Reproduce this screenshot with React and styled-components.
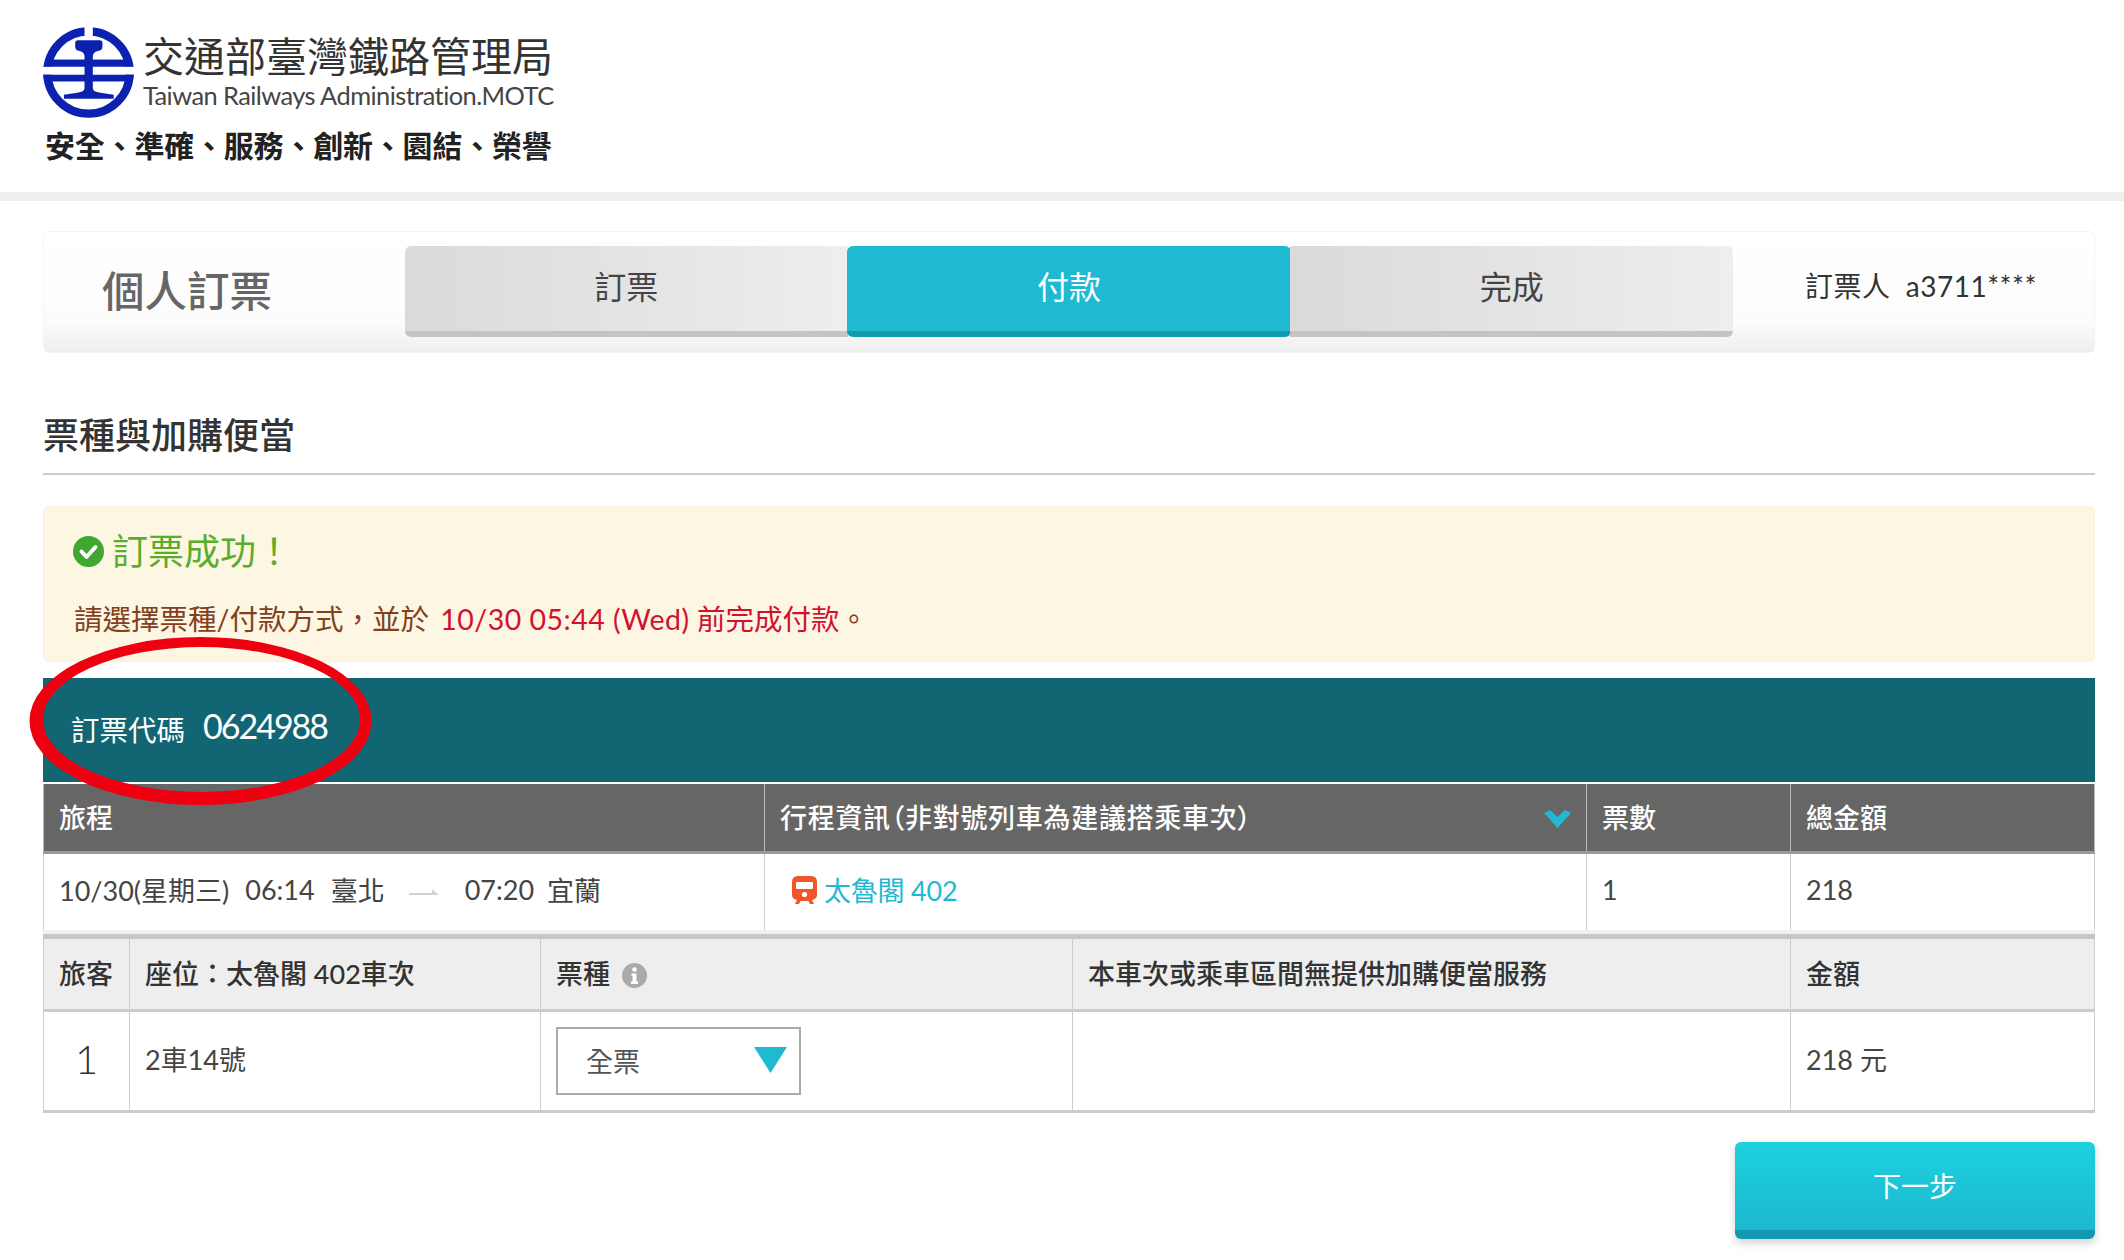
import React from "react";
import styled, { createGlobalStyle } from "styled-components";

const Global = createGlobalStyle`
  html, body { margin: 0; padding: 0; background: #fff; }
  body { font-family: "Lato", "Noto Sans CJK TC", sans-serif; color: #444; overflow: hidden; }
  #root { width: 2124px; height: 1260px; }
  * { box-sizing: border-box; }
`;

const Page = styled.div`width: 2124px; height: 1260px; background: #fff;`;
const Header = styled.header`height: 192px; padding: 27px 0 0 43px;`;
const Brand = styled.div`display: flex; gap: 9px; align-items: flex-start;`;
const BrandText = styled.div`display: flex; flex-direction: column; width: 411px; padding-top: 3px;`;
const AgencyName = styled.div`font-size: 41px; line-height: 54px; color: #333; white-space: nowrap; font-weight: 400;`;
const AgencyEnglish = styled.div`font-size: 25.4px; line-height: 28px; color: #444; white-space: nowrap; letter-spacing: -0.55px; margin-top: -3px; font-weight: 400;`;
const Slogan = styled.div`font-size: 30px; line-height: 40px; margin: 7px 0 0 2px; font-weight: 700; color: #222; white-space: nowrap; width: 506px; letter-spacing: -0.2px;`;
const Divider = styled.div`height: 9px; background: #eee;`;
const Main = styled.main`padding: 30px 29px 0 43px;`;

const StepPanel = styled.div`
  height: 122px; padding-top: 14px; display: flex; align-items: flex-start;
  border: 1px solid #f3f3f3; border-radius: 6px;
  background: linear-gradient(#fff 0%, #fcfcfc 75%, #eee 100%);
`;
const PanelTitle = styled.h1`width: 361px; height: 91px; margin: 0; padding-left: 58px; font-size: 42.5px; line-height: 90px; font-weight: 500; color: #666;`;
const Steps = styled.div`display: grid; grid-template-columns: repeat(3, 1fr); width: 1328px;`;
const Step = styled.div`
  height: 91px; line-height: 82px; text-align: center; font-size: 32px;
  color: ${p => (p.$active ? "#fff" : "#444")};
  border-bottom: 6px solid ${p => (p.$active ? "#129ab0" : "#c4c4c4")};
  border-radius: ${p => p.$radius};
  margin: ${p => (p.$active ? "0 -1px" : "0")};
  background: ${p => (p.$active ? "#1fb9d2" : "linear-gradient(90deg, #dadada, #eeeeee)")};
`;
const UserInfo = styled.div`flex: 1; padding-left: 72px; font-size: 28px; line-height: 80px; color: #333; white-space: nowrap; letter-spacing: 0.5px;`;

const SectionHeading = styled.h2`
  margin: 60px 0 0; height: 62px; padding-bottom: 16px; font-size: 36px; line-height: 44px;
  font-weight: 500; color: #333; border-bottom: 2px solid #ccc;
`;
const Alert = styled.div`
  margin-top: 31px; height: 156px; padding: 19px 29px 0; background: #fdf6e3;
  border-radius: 5px; border: 1px solid #faf2dd;
`;
const AlertTitle = styled.div`display: flex; align-items: center; gap: 8px; font-size: 36px; line-height: 50px; color: #5aad2b;`;
const AlertText = styled.p`margin: 21px 0 0; padding-left: 1px; font-size: 28.5px; line-height: 44px; color: #82401c; white-space: nowrap;`;
const Deadline = styled.span`color: #d3102f; margin-left: 4px;`;
const DeadlineTime = styled.span`letter-spacing: 0.5px;`;

const Booking = styled.section`position: relative; margin-top: 16px;`;
const CodeBar = styled.div`
  height: 106px; background: #126673; color: #fff; padding: 0 28px 4px;
  display: flex; align-items: center; gap: 18px; border-bottom: 2px solid #fff; 
`;
const CodeLabel = styled.span`font-size: 28.5px; line-height: 40px; padding-top: 4px;`;
const CodeValue = styled.span`font-size: 34px; line-height: 40px; margin-top: -4px; letter-spacing: -2px;`;
const Ring = styled.svg`position: absolute; left: -14px; top: -41px; pointer-events: none;`;

const Row = styled.div`
  display: grid; grid-template-columns: ${p => p.$cols}; height: ${p => p.$h}px;
  background: ${p => p.$bg || "#fff"}; color: ${p => p.$color || "#444"};
  border-bottom: ${p => p.$line || "3px solid #ccc"};
`;
const Cell = styled.div`
  display: flex; align-items: center; gap: ${p => p.$gap || 0}px;
  padding: 0 15px ${p => (p.$bold ? 3 : 5)}px; font-size: 27px;
  font-weight: ${p => (p.$bold ? 500 : 400)}; white-space: nowrap; min-width: 0;
  border-left: 1px solid ${p => p.$rule || "#ccc"};
  &:last-child { border-right: 1px solid ${p => p.$rule || "#ccc"}; }
`;
const Wide = styled.span`font-feature-settings: "palt"; flex: 1; letter-spacing: 0.7px;`;
const Arrow = styled.svg`margin: 8px 26px 0 24px;`;
const TimeText = styled.span`margin-right: ${p => p.$gap}px;`;
const TrainName = styled.span`color: #1fb9d2;`;
const TrainLink = styled.span`display: flex; align-items: center; gap: 7px; padding-left: 12px; letter-spacing: -0.2px;`;
const PassengerNo = styled.span`font-size: 40px; width: 100%; text-align: center; font-weight: 300; color: #333;`;
const SelectBox = styled.div`
  width: 245px; height: 68px; padding: 0 12px 2px 28px; margin-top: 5px; display: flex; align-items: center; justify-content: space-between;
  border: 2px solid #aaa; color: #555; background: #fff;
`;
const Separator = styled.div`height: 9px; background: linear-gradient(#f0f0f0 0 4px, #c6c6c6 4px);`;
const Actions = styled.div`display: flex; justify-content: flex-end; margin: 29px 0 0;`;
const NextButton = styled.button`
  width: 360px; height: 97px; padding: 0 0 3px; border: 0; border-bottom: 9px solid #1298b0; border-radius: 6px;
  background: linear-gradient(#1dd1de, #1cb8d1); color: #fff; font: inherit; font-size: 28px;
  box-shadow: 0 4px 8px rgba(0,0,0,.18);
`;
const InfoIcon = styled.svg`margin-top: 6px;`;
const ChevronIcon = styled.svg`margin-top: 6px;`;

const TOP = "721px 822px 204px 305px";
const BOTTOM = "86px 411px 532px 718px 305px";

const Logo = () => (
  <svg width="91" height="91" viewBox="68 52 272 274" aria-label="logo">
    <defs>
      <clipPath id="disc"><circle cx="204" cy="189" r="136" /></clipPath>
    </defs>
    <circle cx="204" cy="189" r="124" fill="none" stroke="#0b22b0" strokeWidth="25" />
    <g clipPath="url(#disc)" fill="#0b22b0">
      <rect x="60" y="150" width="290" height="22" />
      <rect x="60" y="195" width="290" height="21" />
    </g>
    <rect x="60" y="172" width="290" height="23" fill="#fff" />
    <rect x="192" y="44" width="25" height="44" fill="#fff" />
    <path fill="#0b22b0" d="M172 92H238Q246 92 246 100V112Q246 122 232 124Q217 128 217 140V236Q217 248 240 250L280 256V268H130V256L170 250Q192 248 192 236V140Q192 128 177 124Q164 122 164 112V100Q164 92 172 92Z" />
  </svg>
);

const Check = () => (
  <svg width="31" height="31" viewBox="0 0 31 31">
    <circle cx="15.5" cy="15.5" r="15.5" fill="#3fa82e" />
    <path d="M8.5 15.5l5 5.5 9-10" fill="none" stroke="#fff" strokeWidth="4" strokeLinecap="round" strokeLinejoin="round" />
  </svg>
);

const Train = () => (
  <svg width="25" height="28" viewBox="0 0 25 28">
    <path fill="#f0562a" d="M6 0H19Q25 0 25 6V19Q25 23 20 24L22 28H18L16.5 25H8.5L7 28H3L5 24Q0 23 0 19V6Q0 0 6 0Z" />
    <rect x="4" y="6" width="17" height="7" rx="1" fill="#fff" />
    <circle cx="12.5" cy="18.5" r="2.6" fill="#fff" />
  </svg>
);

const Chevron = () => (
  <ChevronIcon width="27" height="18" viewBox="0 0 27 18">
    <path d="M0 3L6 0L13.500 7L21 0L27 3L13.500 18Z" fill="#1fb9d2" />
  </ChevronIcon>
);

const Info = () => (
  <InfoIcon width="25" height="25" viewBox="0 0 25 25">
    <circle cx="12.500" cy="12.500" r="12.500" fill="#aaa" />
    <circle cx="12.500" cy="6.500" r="2.300" fill="#fff" />
    <path d="M9.500 10.500h5v8h1.500v2.500h-7v-2.500h1.500v-5.500h-1z" fill="#fff" />
  </InfoIcon>
);

const Triangle = () => (
  <svg width="33" height="26" viewBox="0 0 33 26"><path d="M0 0H33L16.500 26Z" fill="#1fb9d2" /></svg>
);

export default function App() {
  return (
    <Page>
      <Global />
      <Header>
        <Brand>
          <Logo />
          <BrandText>
            <AgencyName>交通部臺灣鐵路管理局</AgencyName>
            <AgencyEnglish>Taiwan Railways Administration.MOTC</AgencyEnglish>
          </BrandText>
        </Brand>
        <Slogan>安全、準確、服務、創新、園結、榮譽</Slogan>
      </Header>
      <Divider />
      <Main>
        <StepPanel>
          <PanelTitle>個人訂票</PanelTitle>
          <Steps>
            <Step $radius="6px 0 0 6px">訂票</Step>
            <Step $active $radius="6px">付款</Step>
            <Step $radius="0 6px 6px 0">完成</Step>
          </Steps>
          <UserInfo>訂票人&nbsp;&nbsp;a3711****</UserInfo>
        </StepPanel>
        <SectionHeading>票種與加購便當</SectionHeading>
        <Alert>
          <AlertTitle><Check />訂票成功！</AlertTitle>
          <AlertText>請選擇票種/付款方式，並於 <Deadline><DeadlineTime>10/30 05:44 (Wed)</DeadlineTime> 前完成付款</Deadline>。</AlertText>
        </Alert>
        <Booking>
          <CodeBar>
            <CodeLabel>訂票代碼</CodeLabel>
            <CodeValue>0624988</CodeValue>
          </CodeBar>
          <Row $cols={TOP} $h={70} $bg="#666" $color="#fff" $line="3px solid #999">
            <Cell $bold $rule="#bbb">旅程</Cell>
            <Cell $bold $rule="#bbb"><Wide>行程資訊（非對號列車為建議搭乘車次）</Wide><Chevron /></Cell>
            <Cell $bold $rule="#bbb">票數</Cell>
            <Cell $bold $rule="#bbb">總金額</Cell>
          </Row>
          <Row $cols={TOP} $h={76} $line="0">
            <Cell>10/30(星期三)<TimeText $gap={16} /> 06:14<TimeText $gap={16} />臺北<Arrow width="30" height="14" viewBox="0 0 30 14"><path d="M0 6h23V2l7 6H0z" fill="#d2d2d2" /></Arrow>07:20<TimeText $gap={13} />宜蘭</Cell>
            <Cell><TrainLink><Train /><TrainName>太魯閣 402</TrainName></TrainLink></Cell>
            <Cell>1</Cell>
            <Cell>218</Cell>
          </Row>
          <Separator />
          <Row $cols={BOTTOM} $h={73} $bg="#eee" $color="#333">
            <Cell $bold>旅客</Cell>
            <Cell $bold>座位：太魯閣 402車次</Cell>
            <Cell $bold $gap={12}>票種<Info /></Cell>
            <Cell $bold>本車次或乘車區間無提供加購便當服務</Cell>
            <Cell $bold>金額</Cell>
          </Row>
          <Row $cols={BOTTOM} $h={101}>
            <Cell><PassengerNo>1</PassengerNo></Cell>
            <Cell>2車14號</Cell>
            <Cell><SelectBox>全票<Triangle /></SelectBox></Cell>
            <Cell />
            <Cell>218 元</Cell>
          </Row>
          <Ring width="343" height="168" viewBox="0 0 343 168">
            <path fillRule="evenodd" fill="#ee0010" d="M0.500 84A171 84 0 1 1 342.500 84A171 84 0 1 1 0.500 84ZM14 82.500A158.500 72.500 0 1 0 331 82.500A158.500 72.500 0 1 0 14 82.500Z" />
          </Ring>
        </Booking>
        <Actions><NextButton>下一步</NextButton></Actions>
      </Main>
    </Page>
  );
}
